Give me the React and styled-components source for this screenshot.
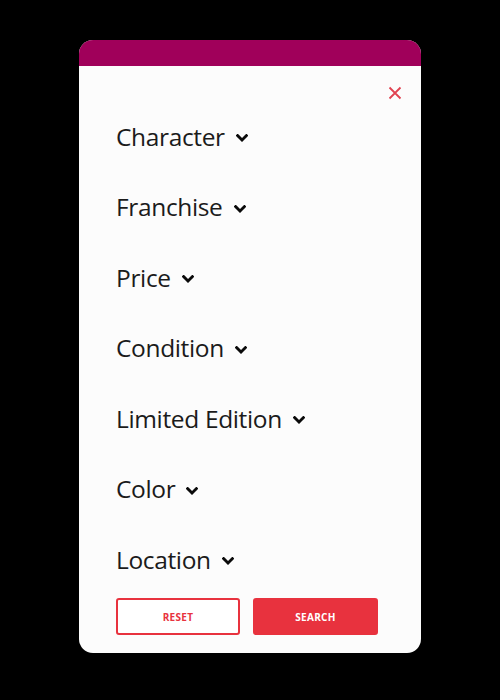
import React from "react";
import styled, { createGlobalStyle } from "styled-components";

const Global = createGlobalStyle`
  html, body { margin: 0; padding: 0; background: #000; }
  body { font-family: "Open Sans", "Noto Sans", sans-serif; }
  * { box-sizing: border-box; }
`;

const Page = styled.div`
  width: 500px;
  height: 700px;
  background: #000;
  padding-top: 40px;
`;

const Card = styled.div`
  width: 342px;
  height: 613px;
  margin: 0 auto;
  background: #fcfcfc;
  border-radius: 14px;
  overflow: hidden;
  display: flex;
  flex-direction: column;
`;

const Header = styled.div`
  height: 26px;
  background: #a0005a;
`;

const Body = styled.div`
  flex: 1;
  display: flex;
  flex-direction: column;
  padding: 0 19px 18px 37px;
`;

const CloseRow = styled.div`
  height: 35.75px;
  display: flex;
  justify-content: flex-end;
  align-items: flex-start;
  padding-top: 20px;
`;

const CloseButton = styled.button`
  border: 0;
  background: none;
  padding: 0;
  width: 15px;
  height: 15px;
  display: flex;
  align-items: center;
  justify-content: center;
  cursor: pointer;
`;

const List = styled.ul`
  list-style: none;
  margin: 0;
  padding: 0;
`;

const Item = styled.li`
  height: 70.5px;
  display: flex;
  align-items: center;
  gap: 11px;
  font-size: 24.5px;
  font-weight: 400;
  letter-spacing: -0.35px;
  line-height: 1;
  color: #1b1b1b;
  cursor: pointer;
`;

const Label = styled.span`
  display: block;
`;

const Chevron = styled.svg`
  width: 12px;
  height: 8px;
  margin-top: 3px;
  flex: none;
`;

const Actions = styled.div`
  display: flex;
  gap: 13px;
  margin-top: 3px;
`;

const Btn = styled.button`
  width: ${(p) => p.$w}px;
  height: 37px;
  border-radius: 3px;
  border: 2px solid #e8323e;
  background: ${(p) => (p.$solid ? "#e8323e" : "#fff")};
  color: ${(p) => (p.$solid ? "#fff" : "#e8323e")};
  font-family: "Open Sans", "Noto Sans", sans-serif;
  font-weight: 700;
  font-size: 10px;
  letter-spacing: 0.3px;
  text-transform: uppercase;
  padding: 0;
  cursor: pointer;
`;

const filters = [
  "Character",
  "Franchise",
  "Price",
  "Condition",
  "Limited Edition",
  "Color",
  "Location",
];

export default function App() {
  return (
    <Page>
      <Global />
      <Card>
        <Header />
        <Body>
          <CloseRow>
            <CloseButton aria-label="Close">
              <svg width="14" height="14" viewBox="0 0 14 14">
                <path
                  d="M1.5 1.5 L12.5 12.5 M12.5 1.5 L1.5 12.5"
                  stroke="#e04250"
                  strokeWidth="1.8"
                  fill="none"
                />
              </svg>
            </CloseButton>
          </CloseRow>
          <List>
            {filters.map((f) => (
              <Item key={f}>
                <Label>{f}</Label>
                <Chevron viewBox="0 0 12 8">
                  <path
                    d="M1.6 1.6 L6 6 L10.4 1.6"
                    stroke="#0a0a0a"
                    strokeWidth="2.8"
                    fill="none"
                    strokeLinecap="square"
                  />
                </Chevron>
              </Item>
            ))}
          </List>
          <Actions>
            <Btn $w={124}>Reset</Btn>
            <Btn $w={125} $solid>
              Search
            </Btn>
          </Actions>
        </Body>
      </Card>
    </Page>
  );
}
